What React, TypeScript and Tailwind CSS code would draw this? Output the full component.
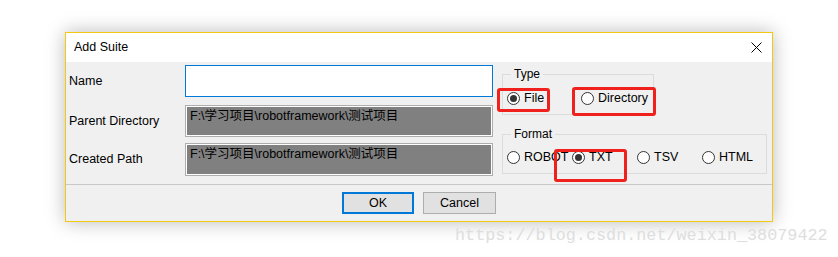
const FONT = "font-['Liberation_Sans','Noto_Sans_CJK_SC',sans-serif]";

const Radio = ({ label, checked, width }: { label: string; checked?: boolean; width: string }) => (
  <div className={`flex items-center gap-[4px] ${width}`}>
    <span className="flex h-[13px] w-[13px] shrink-0 items-center justify-center rounded-full border border-[#333] bg-white">
      {checked && <span className="h-[7px] w-[7px] rounded-full bg-[#333]" />}
    </span>
    <span className="text-[12.5px] leading-none text-black">{label}</span>
  </div>
);

const Group = ({ title, children, className }: { title: string; children: React.ReactNode; className: string }) => (
  <div className={`relative flex items-center border border-[#dcdcdc] pl-[4px] ${className}`}>
    <span className="absolute -top-[9px] left-[8px] bg-[#f0f0f0] px-[3px] text-[12px] leading-[16px] text-black">
      {title}
    </span>
    {children}
  </div>
);

const PathField = ({ value }: { value: string }) => (
  <div className="h-full w-[308px] border border-[#adadad] bg-[#808080] px-[4px] pt-[2px] text-[12.5px] leading-[16px] text-black shadow-[inset_0_0_0_1px_#fff]">
    {value}
  </div>
);

const App = () => {
  const path = "F:\\学习项目\\robotframework\\测试项目";

  return (
    <div className={`relative h-[257px] w-[838px] overflow-hidden bg-white ${FONT}`}>
      <div className="ml-[65px] mt-[32px] flex h-[190px] w-[708px] flex-col border border-[#f2c811] bg-[#f0f0f0] shadow-[0_0_18px_rgba(0,0,0,0.28)]">
        {/* title bar */}
        <div className="flex h-[29px] items-center justify-between bg-white pl-[8px] pr-[10px]">
          <span className="text-[12.5px] text-black">Add Suite</span>
          <svg width="11" height="11" viewBox="0 0 11 11">
            <path d="M0.5 0.5 L10.5 10.5 M10.5 0.5 L0.5 10.5" stroke="#000" strokeWidth="1" />
          </svg>
        </div>

        {/* body */}
        <div className="flex h-[123px] border-b border-[#c8c8c8]">
          <div className="flex flex-col pl-[3px]">
            <div className="mt-[3px] flex h-[32px] items-center">
              <span className="w-[116px] text-[12.5px] text-black">Name</span>
              <div className="h-full w-[308px] border border-[#0078d7] bg-white" />
            </div>
            <div className="mt-[8px] flex h-[32px] items-center">
              <span className="w-[116px] text-[12.5px] text-black">Parent Directory</span>
              <PathField value={path} />
            </div>
            <div className="mt-[6px] flex h-[33px] items-center">
              <span className="w-[116px] text-[12.5px] text-black">Created Path</span>
              <PathField value={path} />
            </div>
          </div>

          <div className="ml-[9px] flex flex-col pt-[12px]">
            <Group title="Type" className="h-[41px] w-[152px] pt-[7px]">
              <Radio label="File" checked width="w-[74px]" />
              <Radio label="Directory" width="w-[70px]" />
            </Group>
            <Group title="Format" className="mt-[19px] h-[40px] w-[265px] pt-[6px]">
              <Radio label="ROBOT" width="w-[65px]" />
              <Radio label="TXT" checked width="w-[65px]" />
              <Radio label="TSV" width="w-[65px]" />
              <Radio label="HTML" width="w-[60px]" />
            </Group>
          </div>
        </div>

        {/* footer */}
        <div className="flex justify-center gap-[9px] pt-[7px]">
          <button className="h-[22px] w-[72px] border-2 border-[#0078d7] bg-[#e1e1e1] text-[12.5px] text-black">
            OK
          </button>
          <button className="h-[22px] w-[73px] border border-[#adadad] bg-[#e1e1e1] text-[12.5px] text-black">
            Cancel
          </button>
        </div>
      </div>

      {/* annotation boxes */}
      <div className="absolute left-[497px] top-[88px] h-[24px] w-[53px] rounded-[3px] border-[3px] border-[#f0201c]" />
      <div className="absolute left-[572px] top-[87px] h-[29px] w-[84px] rounded-[3px] border-[3px] border-[#f0201c]" />
      <div className="absolute left-[554px] top-[149px] h-[33px] w-[73px] rounded-[3px] border-[3px] border-[#f0201c]" />

      {/* watermark */}
      <div className="absolute left-[455px] top-[226px] font-['Liberation_Mono',monospace] text-[16.8px] leading-[20px] text-[#dedede]">
        https://blog.csdn.net/weixin_38079422
      </div>
    </div>
  );
};

export default App;
